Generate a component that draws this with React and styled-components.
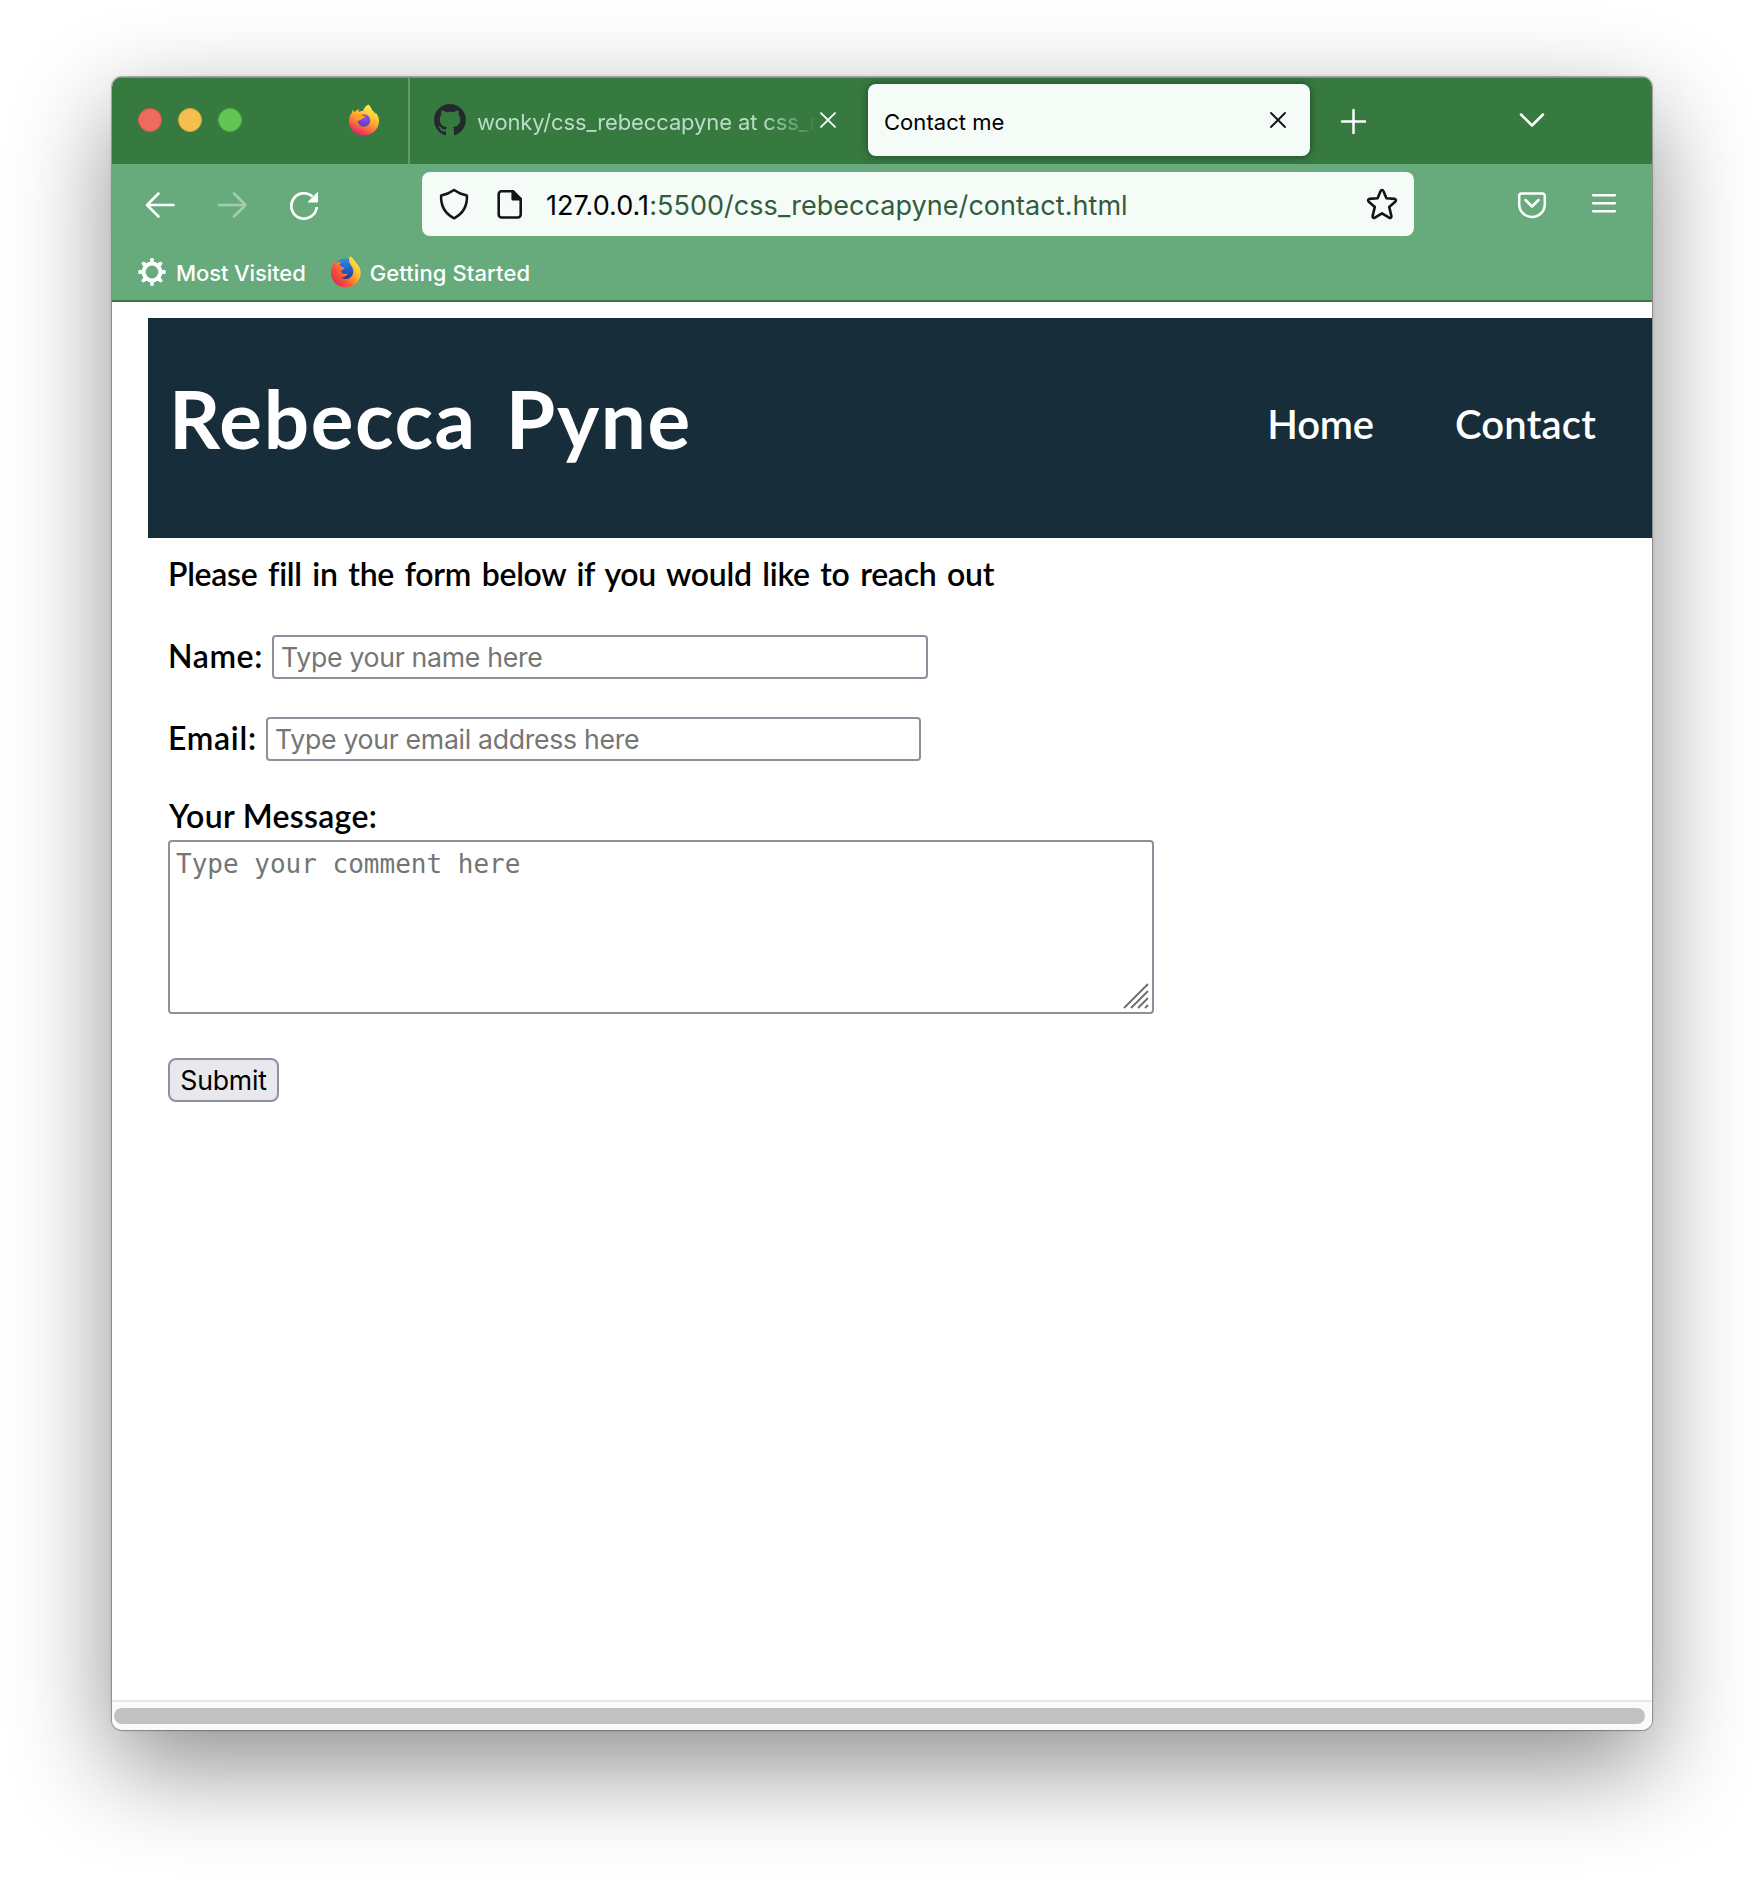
import React from "react";
import styled, { createGlobalStyle } from "styled-components";

const Global = createGlobalStyle`
  html, body { margin: 0; padding: 0; background: #fff; }
  *, *::before, *::after { box-sizing: border-box; }
`;

const ui = `Inter, "Liberation Sans", sans-serif`;
const page = `Lato, "Liberation Sans", sans-serif`;

const Desktop = styled.div`
  width: 1764px;
  height: 1878px;
  padding: 77px 112px 0;
  overflow: hidden;
  background: #fff;
`;

const Window = styled.div`
  width: 1540px;
  height: 1653px;
  display: flex;
  flex-direction: column;
  border-radius: 10px;
  overflow: hidden;
  background: #fff;
  font-family: ${ui};
  box-shadow: 0 0 0 1px rgba(0, 0, 0, 0.22), 0 0 3px rgba(0, 0, 0, 0.25),
    0 36px 100px rgba(0, 0, 0, 0.45);
`;

const TabBar = styled.div`
  height: 87px;
  flex: none;
  display: flex;
  background: #367a40;
  box-shadow: inset 0 1px 0 #6d9f74;
`;

const WindowControls = styled.div`
  width: 296px;
  display: flex;
  align-items: center;
  gap: 16px;
  padding: 0 28px 1px 26px;
`;

const Light = styled.span`
  width: 24px;
  height: 24px;
  border-radius: 50%;
  background: ${(p) => p.$fill};
  border: 1px solid ${(p) => p.$edge};
`;

const PinnedTab = styled.div`
  margin-left: auto;
  display: flex;
`;

const Tab = styled.div`
  display: flex;
  align-items: center;
  width: 458px;
  border-left: 2px solid #5d9c72;
  padding: 0 28px 1px 24px;
`;

const ActiveTab = styled.div`
  display: flex;
  align-items: center;
  justify-content: space-between;
  width: 442px;
  height: 72px;
  margin-top: 7px;
  margin-left: 2px;
  padding: 0 22px 0 16px;
  border-radius: 8px;
  background: #f5fbf7;
  box-shadow: 0 0 8px rgba(0, 0, 0, 0.45);
`;

const TabTitle = styled.span`
  font-size: 22px;
  line-height: 30px;
  padding-top: 4px;
  white-space: nowrap;
  letter-spacing: ${(p) => p.$tracking || "0"};
  color: ${(p) => (p.$faded ? "#badcc7" : "#000")};
  ${(p) =>
    p.$faded &&
    `
    width: 342px;
    margin-left: 11px;
    margin-right: auto;
    mask-image: linear-gradient(to right, #000 285px, transparent 342px);
  `}
`;

const TabActions = styled.div`
  flex: 1;
  display: flex;
  align-items: center;
  justify-content: space-between;
  padding: 0 104px 0 29px;
`;

const Toolbar = styled.div`
  height: 80px;
  flex: none;
  display: flex;
  align-items: center;
  background: #67ab7d;
  padding: 0 32px 0 28px;
`;

const NavButtons = styled.div`
  display: flex;
  gap: 40px;
  width: 282px;
  padding-left: 4px;
`;

const UrlBar = styled.div`
  width: 992px;
  height: 64px;
  display: flex;
  align-items: center;
  border-radius: 8px;
  background: #f5fbf7;
  padding: 0 16px;
`;

const UrlIcons = styled.div`
  display: flex;
  gap: 24px;
`;

const Url = styled.span`
  flex: 1;
  padding: 2px 0 0 20px;
  font-size: 27px;
  letter-spacing: ${(p) => p.$tracking};
  color: #315c3e;
  white-space: nowrap;
`;

const Host = styled.span`
  color: #000;
`;

const ToolbarEnd = styled.div`
  margin-left: auto;
  display: flex;
  gap: 40px;
`;

const Bookmarks = styled.div`
  height: 58px;
  flex: none;
  display: flex;
  align-items: center;
  background: #67ab7d;
  border-bottom: 2px solid #367a40;
  padding: 0 0 0 24px;
`;

const Bookmark = styled.span`
  display: flex;
  align-items: center;
  margin-right: 24px;
`;

const BookmarkLabel = styled.span`
  margin-left: 8px;
  padding-top: 2px;
  font-size: 22px;
  font-weight: 500;
  color: #fff;
  white-space: nowrap;
  letter-spacing: ${(p) => p.$tracking};
`;

const Page = styled.main`
  flex: 1;
  padding: 16px 0 0 36px;
  background: #fff;
  font-family: ${page};
`;

const SiteHeader = styled.header`
  height: 220px;
  display: flex;
  align-items: center;
  justify-content: space-between;
  background: #172d39;
  color: #fff;
  padding: 0 56px 0 21px;
`;

const SiteTitle = styled.h1`
  margin: 0;
  padding-bottom: 21px;
  font-size: 80px;
  font-weight: 700;
  line-height: 94px;
  letter-spacing: 1.6px;
  word-spacing: 8px;
  white-space: nowrap;
`;

const SiteNav = styled.nav`
  display: flex;
  gap: 81px;
  padding-bottom: 9px;
`;

const NavLink = styled.a`
  color: #fff;
  font-size: 40px;
  line-height: 48px;
  font-weight: 600;
  letter-spacing: ${(p) => p.$tracking};
`;

const Form = styled.form`
  display: flex;
  flex-direction: column;
  align-items: flex-start;
  padding-left: 20px;
  color: #000;
  font-size: 32px;
  font-weight: 600;
`;

const Intro = styled.p`
  margin: 0;
  height: 69px;
  line-height: 71px;
  white-space: nowrap;
  letter-spacing: -0.3px;
  word-spacing: 3px;
`;

const Field = styled.div`
  display: flex;
  align-items: center;
  height: 44px;
  margin-top: ${(p) => p.$top}px;
`;

const Label = styled.label`
  width: ${(p) => (p.$width ? p.$width + "px" : "auto")};
  padding-bottom: 3px;
  line-height: 38px;
  white-space: nowrap;
  letter-spacing: ${(p) => p.$tracking || "0"};
`;

const BlockLabel = styled(Label)`
  height: 51px;
  margin-top: 28px;
  padding: 0 0 0 1px;
  line-height: 53px;
`;

const TextInput = styled.input`
  width: ${(p) => p.$width}px;
  height: 44px;
  padding: 0 7px;
  border: 2px solid #8f8f9d;
  border-radius: 4px;
  background: #fff;
  font-family: ${ui};
  font-size: 26.67px;
  letter-spacing: -0.3px;
  &::placeholder { color: #757575; opacity: 1; }
`;

const MessageBox = styled.div`
  position: relative;
  width: 986px;
  height: 174px;
`;

const Message = styled.textarea`
  display: block;
  width: 100%;
  height: 100%;
  padding: 7px 6px;
  border: 2px solid #8f8f9d;
  border-radius: 4px;
  resize: none;
  background: #fff;
  font-family: "DejaVu Sans Mono", monospace;
  font-size: 26px;
  line-height: 31px;
  &::placeholder { color: #757575; opacity: 1; }
`;

const Grip = styled.svg`
  position: absolute;
  right: 5px;
  bottom: 5px;
`;

const Submit = styled.button`
  width: 111px;
  height: 44px;
  margin-top: 44px;
  padding: 0;
  border: 2px solid #8f8f9d;
  border-radius: 8px;
  background: #e9e9ed;
  color: #000;
  font-family: ${ui};
  font-size: 26.67px;
  line-height: 40px;
  letter-spacing: -0.2px;
`;

const ScrollTrack = styled.div`
  height: 30px;
  flex: none;
  padding: 6px 7px 0 2px;
  border-top: 2px solid #e8e8e8;
  background: #fafafa;
`;

const ScrollThumb = styled.div`
  height: 16px;
  border-radius: 8px;
  background: #c1c1c1;
`;

function Icon({ size = 32, color = "#fff", width = 2.5, children, opacity }) {
  return (
    <svg width={size} height={size} viewBox="0 0 32 32" fill="none" stroke={color}
      strokeWidth={width} strokeLinecap="round" strokeLinejoin="round" opacity={opacity}>
      {children}
    </svg>
  );
}

function Close({ color }) {
  return (
    <svg width="20" height="20" viewBox="0 0 20 20" stroke={color} strokeWidth="1.8" strokeLinecap="round">
      <path d="M3 3l14 14M17 3L3 17" />
    </svg>
  );
}

function GitHub() {
  return (
    <svg width="32" height="32" viewBox="0 0 16 16" fill="#24292e">
      <path d="M8 0C3.58 0 0 3.58 0 8c0 3.54 2.29 6.53 5.47 7.59.4.07.55-.17.55-.38 0-.19-.01-.82-.01-1.49-2.01.37-2.53-.49-2.69-.94-.09-.23-.48-.94-.82-1.13-.28-.15-.68-.52-.01-.53.63-.01 1.08.58 1.23.82.72 1.21 1.87.87 2.33.66.07-.52.28-.87.51-1.07-1.78-.2-3.64-.89-3.64-3.95 0-.87.31-1.59.82-2.15-.08-.2-.36-1.02.08-2.12 0 0 .67-.21 2.2.82.64-.18 1.32-.27 2-.27s1.36.09 2 .27c1.53-1.04 2.2-.82 2.2-.82.44 1.1.16 1.92.08 2.12.51.56.82 1.27.82 2.15 0 3.07-1.87 3.75-3.65 3.95.29.25.54.73.54 1.48 0 1.07-.01 1.93-.01 2.2 0 .21.15.46.55.38A8.01 8.01 0 0016 8c0-4.42-3.58-8-8-8z" />
    </svg>
  );
}

function Firefox() {
  return (
    <svg width="32" height="32" viewBox="0 0 32 32">
      <defs>
        <linearGradient id="fxBody" x1="0.8" y1="0.1" x2="0.35" y2="1">
          <stop offset="0" stopColor="#fff04d" />
          <stop offset="0.4" stopColor="#ffb52e" />
          <stop offset="0.7" stopColor="#ff6a3c" />
          <stop offset="1" stopColor="#e5206f" />
        </linearGradient>
        <radialGradient id="fxGlobe" cx="0.6" cy="0.25" r="0.8">
          <stop offset="0" stopColor="#a04af0" />
          <stop offset="1" stopColor="#4a46b8" />
        </radialGradient>
      </defs>
      <path d="M20.300 .6c2 1.800 3.200 3.700 3.700 5.700 1.700 1 2.600 2.300 3 3.600.4-.4.500-.9.500-1.500C30 11 31 14 31 17c0 8-6.500 14.400-15 14.400S1 25 1 17c0-3.200 1-6 2.800-8.200.1-1.100.4-2 .9-2.800.7 1 1.300 1.500 2 1.900 1.300-1.500 2.800-2.400 4.600-2.700-.6.800-1 1.800-1 2.800 1.500-.9 3-1.100 4.700-1 .9-2.600 2.500-4.900 5.300-6.400z" fill="url(#fxBody)" />
      <circle cx="16" cy="16.500" r="6.200" fill="url(#fxGlobe)" />
      <path d="M5.500 12c2.500-2 5.700-2 8.300-.8 1.400.4 2.900.5 3.400 1-.5 1.500-2.200 1.900-3.400 2.700-1 .7-1.400 1.300-2.600 1.700-1.800.4-4.300-.6-5.700-4.600z" fill="#ffa02b" />
    </svg>
  );
}

function FirefoxClassic() {
  return (
    <svg width="32" height="32" viewBox="0 0 32 32">
      <defs>
        <linearGradient id="fcBody" x1="0.95" y1="0.15" x2="0.1" y2="0.85">
          <stop offset="0" stopColor="#fff44f" />
          <stop offset="0.4" stopColor="#ffa42a" />
          <stop offset="0.7" stopColor="#f8553a" />
          <stop offset="1" stopColor="#e32a50" />
        </linearGradient>
        <linearGradient id="fcGlobe" x1="0.5" y1="0" x2="0.5" y2="1">
          <stop offset="0" stopColor="#2a8cf2" />
          <stop offset="1" stopColor="#1f2f8c" />
        </linearGradient>
      </defs>
      <circle cx="15.500" cy="14" r="11.500" fill="url(#fcGlobe)" />
      <path d="M20.300.3c3 2 4 4 5.500 6.200 3 3 4.900 6 4.900 10.200C30.700 25 24 31.300 15.700 31.300S1 25 1 17c0-3.800.6-6 2.200-8.500 0-1.500.1-2.800.6-4 1.200.6 2 1.400 2.800 2.500 1.700-1 3.400-1.300 5-1.100-1.400.9-2 2.100-2 3.300 1.100 1.400 2.600 2 5 2.300-.3 1.400-2 2.200-3.300 3-.5 1 .2 1.900.8 2.800 1.400.7 3.300.8 5.400.3.200 1.200-.9 2.100-2.600 3-1.400.6-2.700 1-3.400 1.200 4.400 2.800 9.700.8 11.400-3.800 1.200-4-.5-7-2.700-9.800C18.500 5 18.700 2.500 20.300.3z" fill="url(#fcBody)" />
    </svg>
  );
}

function Gear() {
  return (
    <svg width="32" height="32" viewBox="-16 -16 32 32">
      <circle r="8.400" fill="none" stroke="#fff" strokeWidth="4" />
      {[0, 45, 90, 135, 180, 225, 270, 315].map((a) => (
        <path key={a} d="M-2.200 -9L-1.700 -13.300Q0 -14.800 1.700 -13.300L2.200 -9z" fill="#fff" transform={`rotate(${a})`} />
      ))}
    </svg>
  );
}

export default function App() {
  return (
    <Desktop>
      <Global />
      <Window>
        <TabBar>
          <WindowControls>
            <Light $fill="#ed6a5e" $edge="#d9574b" />
            <Light $fill="#f5bf4f" $edge="#dca53a" />
            <Light $fill="#61c654" $edge="#4fb143" />
            <PinnedTab><Firefox /></PinnedTab>
          </WindowControls>
          <Tab>
            <GitHub />
            <TabTitle $faded $tracking="-0.12px">wonky/css_rebeccapyne at css_r</TabTitle>
            <Close color="#fff" />
          </Tab>
          <ActiveTab>
            <TabTitle $tracking="0.05px">Contact me</TabTitle>
            <Close color="#111" />
          </ActiveTab>
          <TabActions>
            <Icon><path d="M14.500 5v23M3 16.500h23" /></Icon>
            <Icon><path d="M5 9.500l11 11 11-11" /></Icon>
          </TabActions>
        </TabBar>
        <Toolbar>
          <NavButtons>
            <Icon><path d="M3 17h26.500M14.500 5.500L3 17l11.500 11.500" /></Icon>
            <Icon opacity="0.4"><path d="M3 17h26.500M18 5.500L29.500 17 18 28.500" /></Icon>
            <Icon width="2.700">
              <path d="M28.700 19A12.700 12.700 0 1 1 24.500 8.500" strokeLinecap="butt" />
              <path d="M29.500 5v9h-9z" fill="#fff" strokeWidth="1" />
            </Icon>
          </NavButtons>
          <UrlBar>
            <UrlIcons>
              <Icon color="#15141a" width="2.600">
                <path d="M16 1.500c4 2.900 8.500 4.800 13.300 5.700.5 9.800-3.800 18.500-13.300 23.500C6.500 25.700 2.200 17 2.700 7.200 7.500 6.300 12 4.400 16 1.500z" transform="translate(0.500 0.500) scale(0.970)" />
              </Icon>
              <Icon color="#15141a" width="2.600">
                <path d="M7.500 3.300h11.700l7.500 7.500v15.900a2.800 2.800 0 0 1-2.800 2.800H7.500a2.800 2.800 0 0 1-2.800-2.800V6.100a2.800 2.800 0 0 1 2.800-2.800z" />
                <path d="M18.700 3.300l8 8h-8z" fill="#15141a" />
              </Icon>
            </UrlIcons>
            <Url $tracking="0.050px"><Host>127.0.0.1</Host>:5500/css_rebeccapyne/contact.html</Url>
            <Icon color="#15141a" width="2.600">
              <path d="M14.600 2.900a1.500 1.500 0 0 1 2.800 0l3 7.300 8.400.7a1.500 1.500 0 0 1 .7 2.500l-6.300 5.500 2.200 9.200a1.500 1.500 0 0 1-2.300 1.600L16 25.300l-7.100 4.400a1.500 1.500 0 0 1-2.300-1.600l2.200-9.200L2.500 13.400a1.500 1.500 0 0 1 .7-2.500l8.400-.7z" />
            </Icon>
          </UrlBar>
          <ToolbarEnd>
            <Icon>
              <path d="M5.500 5.500h21a2.300 2.300 0 0 1 2.300 2.300v8.400a12.800 12.800 0 0 1-25.600 0V7.800a2.300 2.300 0 0 1 2.300-2.300z" />
              <path d="M9.500 12l6.500 6.500 6.500-6.500" />
            </Icon>
            <Icon><path d="M5.200 7.200h21.600M5.200 15.200h21.600M5.200 23.200h21.600" /></Icon>
          </ToolbarEnd>
        </Toolbar>
        <Bookmarks>
          <Bookmark>
            <Gear />
            <BookmarkLabel $tracking="-0.100px">Most Visited</BookmarkLabel>
          </Bookmark>
          <Bookmark>
            <FirefoxClassic />
            <BookmarkLabel $tracking="0.100px">Getting Started</BookmarkLabel>
          </Bookmark>
        </Bookmarks>
        <Page>
          <SiteHeader>
            <SiteTitle>Rebecca Pyne</SiteTitle>
            <SiteNav>
              <NavLink $tracking="-0.200px">Home</NavLink>
              <NavLink $tracking="0.200px">Contact</NavLink>
            </SiteNav>
          </SiteHeader>
          <Form>
            <Intro>Please fill in the form below if you would like to reach out</Intro>
            <Field $top={28}>
              <Label $width={104} $tracking="0.600px">Name:</Label>
              <TextInput $width={656} placeholder="Type your name here" />
            </Field>
            <Field $top={38}>
              <Label $width={98} $tracking="0.700px">Email:</Label>
              <TextInput $width={655} placeholder="Type your email address here" />
            </Field>
            <BlockLabel $tracking="0.300px">Your Message:</BlockLabel>
            <MessageBox>
              <Message placeholder="Type your comment here" />
              <Grip width="26" height="26" viewBox="0 0 26 26" stroke="#6d6d6d" strokeWidth="1.800">
                <path d="M1 25L25 1M8 25L25 8M15 25L25 15M22 25L25 22" />
              </Grip>
            </MessageBox>
            <Submit type="button">Submit</Submit>
          </Form>
        </Page>
        <ScrollTrack><ScrollThumb /></ScrollTrack>
      </Window>
    </Desktop>
  );
}
